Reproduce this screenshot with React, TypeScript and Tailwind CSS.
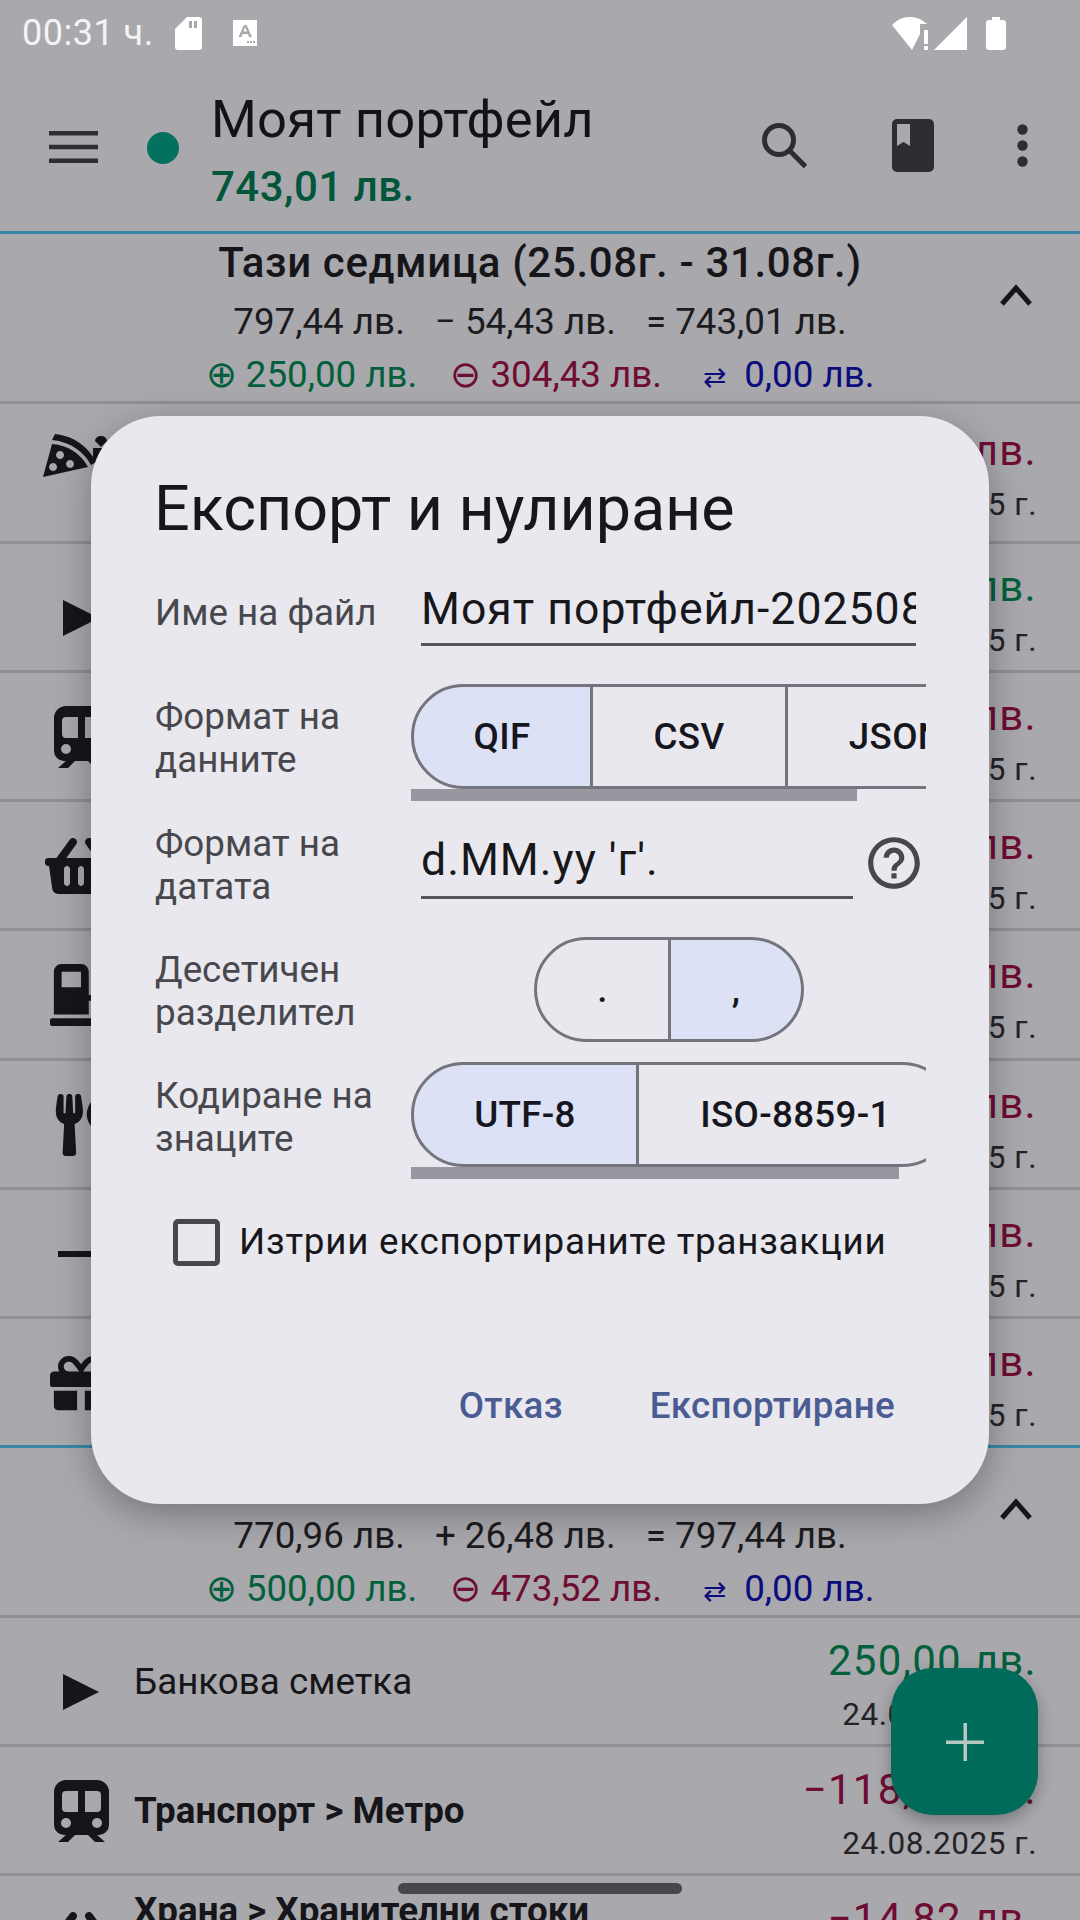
import type { ReactNode } from "react";
import { FaGasPump, FaGift, FaShoppingBasket, FaUtensils } from "react-icons/fa";
import { MdHelpOutline } from "react-icons/md";

const ink = "#16161a";

function Play() {
  return (
    <svg className="mt-[20px]" width="36" height="36" viewBox="0 0 36 36">
      <path d="M0 0 36 18 0 36z" fill={ink} />
    </svg>
  );
}

function Train() {
  return (
    <svg width="55" height="62" viewBox="0 0 55 62">
      <path
        fillRule="evenodd"
        fill={ink}
        d="M12 0h31a12 12 0 0 1 12 12v33a10 10 0 0 1-10 10H10A10 10 0 0 1 0 45V12A12 12 0 0 1 12 0zM12 11a4 4 0 0 0-4 4v13a4 4 0 0 0 4 4h12V11zM31 11v21h12a4 4 0 0 0 4-4V15a4 4 0 0 0-4-4zM12 38a5 5 0 1 0 0 10 5 5 0 0 0 0-10zM43 38a5 5 0 1 0 0 10 5 5 0 0 0 0-10z"
      />
      <path d="M13 54h9l-8 8H4zM33 54h9l9 8H41z" fill={ink} />
    </svg>
  );
}

function PizzaGift() {
  return (
    <svg className="-ml-[6px] -mt-[20px]" width="70" height="60" viewBox="0 0 70 60">
      <path d="M12 2C32 4 46 16 53 30l-5 3C41 20 28 10 9 8z" fill={ink} />
      <path
        fillRule="evenodd"
        fill={ink}
        d="M9 12C25 13 38 22 45 35L0 45zM17 19a4 4 0 1 0 .1 0zM10 31a4 4 0 1 0 .1 0zM27 28a4 4 0 1 0 .1 0z"
      />
      <path d="M50 16h22v10l-8 16H58L50 26z" fill={ink} />
      <path d="M52 9a6 5 0 1 1 12 0l-6 6z" fill={ink} />
      <path d="M58 48h6l-3 11h-3z" fill={ink} />
    </svg>
  );
}

function Row({
  icon,
  title,
  bold,
  amount,
  tone,
  date = "24.08.2025 г.",
  tall,
  line = "border-[#908f95]",
}: {
  icon?: ReactNode;
  title?: string;
  bold?: boolean;
  amount: string;
  tone: string;
  date?: string;
  tall?: boolean;
  line?: string;
}) {
  return (
    <div
      className={`flex shrink-0 items-start border-b-[3px] ${line} ${
        tall ? "h-[140px] pt-[18px]" : "h-[129.15px] pt-[14px]"
      }`}
    >
      <div className="flex h-[100px] w-[134px] shrink-0 items-center justify-center pl-[28px]">
        {icon}
      </div>
      <div
        className={`flex h-[100px] flex-1 items-center text-[36.75px] leading-[48px] text-[#16161a] ${
          bold ? "font-bold" : ""
        }`}
      >
        {title}
      </div>
      <div className="mr-[43px] mt-[1px] flex flex-col items-end">
        <div className={`text-[42px] leading-[56px] tracking-[1.3px] ${tone}`}>{amount}</div>
        <div className="mt-[4px] text-[31.5px] leading-[44px] tracking-[0.55px] text-[#232327]">
          {date}
        </div>
      </div>
    </div>
  );
}

function Summary({
  title,
  line,
  income,
  expense,
}: {
  title: string;
  line: [string, string, string];
  income: string;
  expense: string;
}) {
  return (
    <div className="relative flex h-[170px] shrink-0 flex-col items-center border-b-[3px] border-[#908f95] pt-[3px]">
      <div className="h-[62px] whitespace-nowrap text-[42px] font-medium leading-[52px] tracking-[0.65px] text-[#16161a]">
        {title}
      </div>
      <div className="flex h-[53px] items-center gap-[30px] text-[36.75px] text-[#1c1c20]">
        <span>{line[0]}</span>
        <span>{line[1]}</span>
        <span>{line[2]}</span>
      </div>
      <div className="flex h-[53px] items-center gap-[33px] text-[36.75px]">
        <span className="text-[#04603c]">⊕ {income}</span>
        <span className="text-[#6e0c33]">⊖ {expense}</span>
        <span className="ml-[8px] text-[#0c0c7c]">
          <span className="mr-[9px] text-[28px]">⇄</span> 0,00 лв.
        </span>
      </div>
      <svg
        className="absolute right-[48px] top-[50px]"
        width="32"
        height="22"
        viewBox="0 0 32 22"
        fill="none"
        stroke={ink}
        strokeWidth="5"
      >
        <path d="M2 20 16 4l14 16" />
      </svg>
    </div>
  );
}

function Seg({
  width,
  on,
  first,
  last,
  children,
}: {
  width: number;
  on?: boolean;
  first?: boolean;
  last?: boolean;
  children: string;
}) {
  return (
    <div
      style={{ width }}
      className={`flex h-[105px] shrink-0 items-center justify-center border-y-[3px] border-r-[3px] border-[#74747c] text-[36.75px] font-medium tracking-[0.3px] text-[#16161e] ${
        on ? "bg-[#dce1f6]" : ""
      } ${first ? "rounded-l-[53px] border-l-[3px]" : ""} ${last ? "rounded-r-[53px]" : ""}`}
    >
      {children}
    </div>
  );
}

function Label({ children }: { children: ReactNode }) {
  return (
    <div className="w-[256px] shrink-0 text-[36.75px] leading-[43px] text-[#47474d]">{children}</div>
  );
}

function ExportDialog() {
  return (
    <div className="absolute left-[91px] top-[416px] flex h-[1088px] w-[898px] flex-col rounded-[70px] bg-[#e8e8ee] pl-[64px] pr-[63px] pt-[51px] shadow-[0_10px_36px_rgba(0,0,0,0.3)]">
      <div className="-ml-[1px] h-[84px] text-[62.8px] leading-[84px] text-[#17171b]">
        Експорт и нулиране
      </div>

      <div className="mt-[16px] flex h-[90px] items-center">
        <Label>Име на файл</Label>
        <div className="ml-[10px] mt-[3px] h-[65px] w-[495px] overflow-hidden whitespace-nowrap border-b-[3px] border-[#56565c] text-[44.6px] leading-[56px] tracking-[1px] text-[#17171b]">
          Моят портфейл-20250830
        </div>
      </div>

      <div className="mt-[27px] flex h-[117px]">
        <div className="flex h-[105px] items-center pt-[3px]">
          <Label>
            Формат на
            <br />
            данните
          </Label>
        </div>
        <div className="w-[515px] overflow-hidden">
          <div className="flex">
            <Seg width={182} on first>
              QIF
            </Seg>
            <Seg width={195}>CSV</Seg>
            <Seg width={220} last>
              JSON
            </Seg>
          </div>
          <div className="h-[12px] w-[446px] bg-[#98979f]" />
        </div>
      </div>

      <div className="mt-[14px] flex h-[100px] items-center">
        <Label>
          Формат на
          <br />
          датата
        </Label>
        <div className="ml-[10px] mt-[3px] h-[65px] w-[432px] border-b-[3px] border-[#56565c] text-[44.6px] leading-[52px] tracking-[1px] text-[#17171b]">
          d.MM.yy 'г'.
        </div>
        <MdHelpOutline className="mb-[5px] ml-[10px]" size={62} color="#47474d" />
      </div>

      <div className="mt-[22px] flex h-[105px] items-center">
        <div className="pt-[3px]">
          <Label>
            Десетичен
            <br />
            разделител
          </Label>
        </div>
        <div className="ml-[123px] flex">
          <Seg width={137} first>
            .
          </Seg>
          <Seg width={133} on last>
            ,
          </Seg>
        </div>
      </div>

      <div className="mt-[20px] flex h-[117px]">
        <div className="flex h-[105px] items-center pt-[5px]">
          <Label>
            Кодиране на
            <br />
            знаците
          </Label>
        </div>
        <div className="w-[515px] overflow-hidden">
          <div className="flex">
            <Seg width={228} on first>
              UTF-8
            </Seg>
            <Seg width={316} last>
              ISO-8859-1
            </Seg>
          </div>
          <div className="h-[12px] w-[488px] bg-[#98979f]" />
        </div>
      </div>

      <div className="mt-[33px] flex h-[60px] items-center pl-[18px]">
        <div className="h-[47px] w-[47px] rounded-[5px] border-[5px] border-[#47474d]" />
        <div className="ml-[19px] text-[36.75px] tracking-[0.75px] text-[#17171b]">
          Изтрии експортираните транзакции
        </div>
      </div>

      <div className="mt-[112px] flex h-[43px] items-center justify-end gap-[87px] pr-[31px] text-[36.75px] font-medium tracking-[0.3px] text-[#4a5c92]">
        <span>Отказ</span>
        <span>Експортиране</span>
      </div>
    </div>
  );
}

export default function App() {
  return (
    <div className="relative flex h-[1920px] w-[1080px] flex-col overflow-hidden bg-[#a9a8ad] font-[Roboto,sans-serif]">
      {/* status bar */}
      <div className="flex h-[66px] shrink-0 items-center justify-between pl-[22px] pr-[74px] text-white">
        <div className="flex items-center">
          <span className="text-[36px] tracking-[0.5px] text-[#f4f4f6]">00:31 ч.</span>
          <svg className="ml-[21px]" width="27" height="33" viewBox="0 0 27 33">
            <path fill="#fff" d="M12 0h12a3 3 0 0 1 3 3v27a3 3 0 0 1-3 3H3a3 3 0 0 1-3-3V12z" />
            <path fill="#a9a8ad" d="M14 4h3v7h-3zM19 4h3v7h-3z" />
          </svg>
          <svg className="ml-[31px]" width="24" height="26" viewBox="0 0 24 26">
            <path fill="#fff" d="M0 0h24v26H0z" />
            <path
              fill="#a9a8ad"
              d="M8.500 17H5.500L11 5h2.500L19 17h-3l-1-3H9.500zM10.500 11.500h3.500L12 7zM14 21h2v2h-2zM17 21h2v2h-2zM20 21h2v2h-2z"
            />
          </svg>
        </div>
        <div className="flex items-center">
          <svg width="36" height="33" viewBox="0 0 36 33" fill="#fff">
            <path d="M0 8C10-2.500 25-2.500 35 7h-7v10L20 33z" />
            <path d="M32 13h4v14h-4zM32 29h4v4h-4z" />
          </svg>
          <svg className="ml-[6px]" width="33" height="33" viewBox="0 0 33 33">
            <path fill="#fff" d="M33 0v33H0z" />
          </svg>
          <svg className="ml-[19px]" width="20" height="33" viewBox="0 0 20 33">
            <path
              fill="#fff"
              d="M6 0h8v3h3a3 3 0 0 1 3 3v24a3 3 0 0 1-3 3H3a3 3 0 0 1-3-3V6a3 3 0 0 1 3-3h3z"
            />
          </svg>
        </div>
      </div>

      {/* toolbar */}
      <div className="flex h-[168px] shrink-0 items-center border-b-[3px] border-[#3a86a6]">
        <svg className="mb-[4px] ml-[49px]" width="49" height="32" viewBox="0 0 49 32" fill="#2d2d33">
          <path d="M0 0h49v4.500H0zM0 13.750h49v4.500H0zM0 27.500h49V32H0z" />
        </svg>
        <div className="mb-[2px] ml-[49px] h-[32px] w-[32px] rounded-full bg-[#04705f]" />
        <div className="ml-[32px] flex-1">
          <div className="mt-[4px] text-[52.5px] leading-[66px] tracking-[0.2px] text-[#131316]">
            Моят портфейл
          </div>
          <div className="mt-[7px] text-[42px] font-medium leading-[56px] tracking-[0.5px] text-[#02563a]">
            743,01 лв.
          </div>
        </div>
        <svg
          className="mb-[6px] mr-[85px]"
          width="45"
          height="45"
          viewBox="0 0 45 45"
          fill="none"
          stroke="#2d2d33"
          strokeWidth="5"
        >
          <circle cx="17" cy="17" r="14.500" />
          <path d="m27 27 16.500 16.500" />
        </svg>
        <svg className="mb-[6px] mr-[83px]" width="42" height="53" viewBox="0 0 42 53">
          <path
            fill="#2d2d33"
            fillRule="evenodd"
            d="M5 0h32a5 5 0 0 1 5 5v43a5 5 0 0 1-5 5H5a5 5 0 0 1-5-5V5a5 5 0 0 1 5-5zM5 5v22l6.500-4 6.500 4V5z"
          />
        </svg>
        <svg className="mb-[6px] mr-[52px]" width="11" height="43" viewBox="0 0 11 43" fill="#2d2d33">
          <circle cx="5.500" cy="5.500" r="5.200" />
          <circle cx="5.500" cy="21.500" r="5.200" />
          <circle cx="5.500" cy="37.500" r="5.200" />
        </svg>
      </div>

      {/* week list */}
      <Summary
        title="Тази седмица (25.08г. - 31.08г.)"
        line={["797,44 лв.", "− 54,43 лв.", "= 743,01 лв."]}
        income="250,00 лв."
        expense="304,43 лв."
      />
      <Row tall icon={<PizzaGift />} amount="−81,50 лв." tone="text-[#6e0c33]" date="29.08.2025 г." />
      <Row icon={<Play />} amount="250,00 лв." tone="text-[#04603c]" date="29.08.2025 г." />
      <Row icon={<Train />} amount="−52,00 лв." tone="text-[#6e0c33]" date="28.08.2025 г." />
      <Row icon={<FaShoppingBasket size={72} color={ink} />} amount="−47,33 лв." tone="text-[#6e0c33]" date="28.08.2025 г." />
      <Row icon={<FaGasPump size={62} color={ink} />} amount="−60,00 лв." tone="text-[#6e0c33]" date="27.08.2025 г." />
      <Row icon={<FaUtensils size={62} color={ink} />} amount="−18,60 лв." tone="text-[#6e0c33]" date="26.08.2025 г." />
      <Row icon={<div className="h-[6px] w-[46px] bg-[#16161a]" />} amount="−20,00 лв." tone="text-[#6e0c33]" date="26.08.2025 г." />
      <Row icon={<FaGift size={62} color={ink} />} amount="−25,00 лв." tone="text-[#6e0c33]" date="25.08.2025 г." line="border-[#3a86a6]" />

      <Summary
        title="Миналата седмица (18.08г. - 24.08г.)"
        line={["770,96 лв.", "+ 26,48 лв.", "= 797,44 лв."]}
        income="500,00 лв."
        expense="473,52 лв."
      />
      <Row icon={<Play />} title="Банкова сметка" amount="250,00 лв." tone="text-[#04603c]" />
      <Row icon={<Train />} title="Транспорт > Метро" bold amount="−118,00 лв." tone="text-[#6e0c33]" />
      <div className="flex items-start pt-[14px]">
        <div className="flex h-[100px] w-[134px] shrink-0 items-center justify-center pl-[28px]">
          <FaShoppingBasket size={72} color={ink} />
        </div>
        <div className="-mt-[3px] flex-1 whitespace-nowrap text-[36.75px] font-bold leading-[48px] text-[#16161a]">
          Храна &gt; Хранителни стоки
        </div>
        <div className="mr-[43px] mt-[1px] text-[42px] leading-[56px] tracking-[1.3px] text-[#6e0c33]">
          −14,82 лв.
        </div>
      </div>

      <ExportDialog />

      {/* add button */}
      <div className="absolute left-[891px] top-[1668px] flex h-[147px] w-[147px] items-center justify-center rounded-[42px] bg-[#006a5b] shadow-[0_6px_16px_rgba(0,0,0,0.3)]">
        <svg width="38" height="38" viewBox="0 0 38 38" fill="#b5c9c1">
          <path d="M17.500 0h3.500v38h-3.500zM0 17.500h38V21H0z" />
        </svg>
      </div>

      {/* home indicator */}
      <div className="absolute left-[398px] top-[1883px] h-[11px] w-[284px] rounded-full bg-[#47474b]" />
    </div>
  );
}
